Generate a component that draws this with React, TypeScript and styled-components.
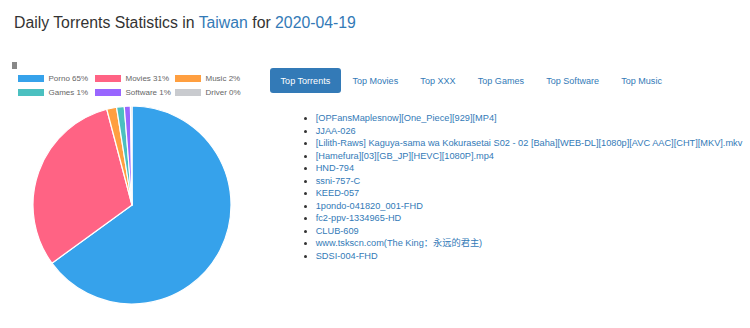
import React from 'react';
import styled, { createGlobalStyle } from 'styled-components';

const GlobalStyle = createGlobalStyle`
  html, body {
    margin: 0;
    padding: 0;
    background: #fff;
  }
  body {
    font-family: "Liberation Sans", Arial, "Noto Sans CJK SC", sans-serif;
    color: #333;
  }
`;

interface Slice {
  label: string;
  value: number;
  shown: string;
  color: string;
}

const slices: Slice[] = [
  { label: 'Porno', value: 65, shown: '65%', color: '#36a2eb' },
  { label: 'Movies', value: 30.9, shown: '31%', color: '#ff6384' },
  { label: 'Music', value: 1.6, shown: '2%', color: '#ff9f40' },
  { label: 'Games', value: 1.25, shown: '1%', color: '#4bc0c0' },
  { label: 'Software', value: 1.0, shown: '1%', color: '#9966ff' },
  { label: 'Driver', value: 0.25, shown: '0%', color: '#c9cbcf' },
];

const tabs = ['Top Torrents', 'Top Movies', 'Top XXX', 'Top Games', 'Top Software', 'Top Music'];

const torrents = [
  '[OPFansMaplesnow][One_Piece][929][MP4]',
  'JJAA-026',
  '[Lilith-Raws] Kaguya-sama wa Kokurasetai S02 - 02 [Baha][WEB-DL][1080p][AVC AAC][CHT][MKV].mkv',
  '[Hamefura][03][GB_JP][HEVC][1080P].mp4',
  'HND-794',
  'ssni-757-C',
  'KEED-057',
  '1pondo-041820_001-FHD',
  'fc2-ppv-1334965-HD',
  'CLUB-609',
  'www.tskscn.com(The King：永远的君主)',
  'SDSI-004-FHD',
];

const Page = styled.div`
  padding: 13px 0 0 14px;
`;

const Title = styled.h3`
  margin: 0;
  font-size: 15.8px;
  line-height: 20px;
  font-weight: normal;
  color: #333;
`;

const Accent = styled.span`
  color: #337ab7;
`;

const Body = styled.div`
  display: flex;
  margin-top: 29px;
  margin-left: -2px;
`;

const ChartCol = styled.div`
  width: 240px;
  display: flex;
  flex-direction: column;
`;

const EmptyMark = styled.span`
  width: 5px;
  height: 7px;
  background: #888;
`;

const Legend = styled.div`
  display: grid;
  grid-template-columns: 77px 80px auto;
  grid-auto-rows: 14px;
  margin: 2.5px 0 0 6px;
`;

const LegendItem = styled.div`
  display: flex;
  align-items: center;
  gap: 4.5px;
  font-size: 8px;
  color: #666;
  white-space: nowrap;
`;

const Swatch = styled.span<{ $color: string }>`
  width: 26px;
  height: 7px;
  background: ${p => p.$color};
`;

const PieBox = styled.svg`
  display: block;
  margin: 5.5px auto 0;
`;

const Side = styled.div`
  margin-left: 18px;
  padding-top: 6px;
`;

const Pills = styled.ul`
  display: flex;
  gap: 1px;
  list-style: none;
  margin: 0;
  padding: 0;
`;

const Pill = styled.li<{ $active?: boolean }>`
  height: 25px;
  display: flex;
  align-items: center;
  padding: 0 10.6px;
  border-radius: 3px;
  font-size: 9.05px;
  color: ${p => (p.$active ? '#fff' : '#337ab7')};
  background: ${p => (p.$active ? '#337ab7' : 'transparent')};
  white-space: nowrap;
`;

const TorrentList = styled.ul`
  margin: 19px 0 0;
  padding-left: 45.7px;
  font-size: 9.22px;
  line-height: 12.5px;
  color: #333;
`;

const TorrentLink = styled.a`
  color: #337ab7;
  text-decoration: none;
  white-space: nowrap;
`;

const slicePath = (cx: number, cy: number, r: number, a0: number, a1: number) => {
  const p0 = [cx + r * Math.sin(a0), cy - r * Math.cos(a0)];
  const p1 = [cx + r * Math.sin(a1), cy - r * Math.cos(a1)];
  const large = a1 - a0 > Math.PI ? 1 : 0;
  return `M${cx},${cy} L${p0[0]},${p0[1]} A${r},${r} 0 ${large} 1 ${p1[0]},${p1[1]} Z`;
};

const PieChart: React.FC = () => {
  const total = slices.reduce((s, d) => s + d.value, 0);
  let angle = 0;
  return (
    <PieBox width={200} height={200} viewBox="0 0 200 200">
      {slices.map(d => {
        const a0 = angle;
        const a1 = angle + (d.value / total) * Math.PI * 2;
        angle = a1;
        return (
          <path
            key={d.label}
            d={slicePath(100, 100, 99, a0, a1)}
            fill={d.color}
            stroke="#fff"
            strokeWidth={1.2}
            strokeLinejoin="round"
          />
        );
      })}
    </PieBox>
  );
};

const App: React.FC = () => (
  <Page>
    <GlobalStyle />
    <Title>
      Daily Torrents Statistics in <Accent>Taiwan</Accent> for <Accent>2020-04-19</Accent>
    </Title>
    <Body>
      <ChartCol>
        <EmptyMark />
        <Legend>
          {slices.map(d => (
            <LegendItem key={d.label}>
              <Swatch $color={d.color} />
              {d.label} {d.shown}
            </LegendItem>
          ))}
        </Legend>
        <PieChart />
      </ChartCol>
      <Side>
        <Pills>
          {tabs.map((t, i) => (
            <Pill key={t} $active={i === 0}>
              {t}
            </Pill>
          ))}
        </Pills>
        <TorrentList>
          {torrents.map(t => (
            <li key={t}>
              <TorrentLink href="#">{t}</TorrentLink>
            </li>
          ))}
        </TorrentList>
      </Side>
    </Body>
  </Page>
);

export default App;
